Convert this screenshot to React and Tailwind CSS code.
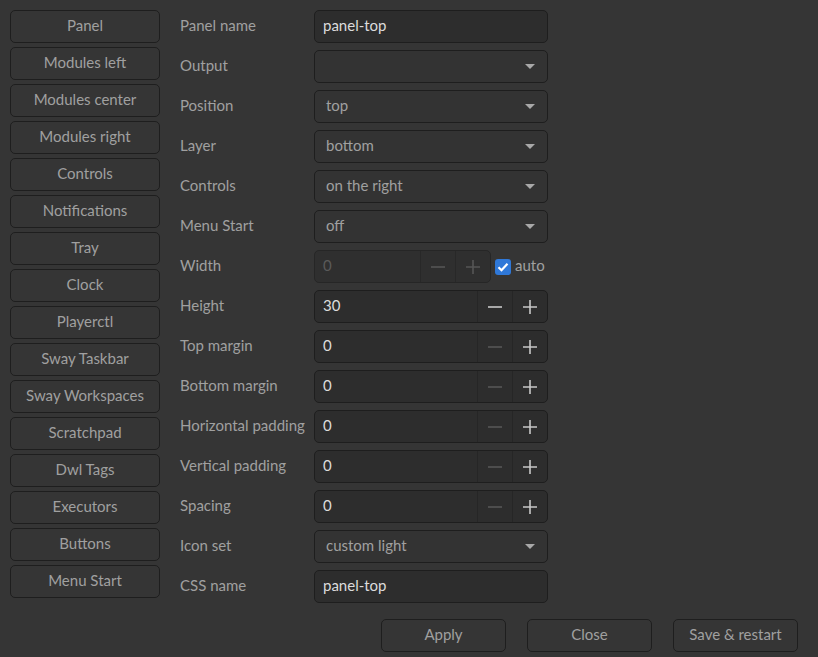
import React from "react";

const tabs = [
  "Panel",
  "Modules left",
  "Modules center",
  "Modules right",
  "Controls",
  "Notifications",
  "Tray",
  "Clock",
  "Playerctl",
  "Sway Taskbar",
  "Sway Workspaces",
  "Scratchpad",
  "Dwl Tags",
  "Executors",
  "Buttons",
  "Menu Start",
];

const rows = [
  { label: "Panel name", type: "entry", value: "panel-top" },
  { label: "Output", type: "combo", value: "" },
  { label: "Position", type: "combo", value: "top" },
  { label: "Layer", type: "combo", value: "bottom" },
  { label: "Controls", type: "combo", value: "on the right" },
  { label: "Menu Start", type: "combo", value: "off" },
  { label: "Width", type: "width", value: "0" },
  { label: "Height", type: "spin", value: "30", minus: true },
  { label: "Top margin", type: "spin", value: "0" },
  { label: "Bottom margin", type: "spin", value: "0" },
  { label: "Horizontal padding", type: "spin", value: "0" },
  { label: "Vertical padding", type: "spin", value: "0" },
  { label: "Spacing", type: "spin", value: "0" },
  { label: "Icon set", type: "combo", value: "custom light" },
  { label: "CSS name", type: "entry", value: "panel-top" },
];

function Minus({ dim }) {
  return (
    <svg width="16" height="16" viewBox="0 0 16 16">
      <path d="M1 8h14" stroke={dim ? "#555555" : "#c8c8c8"} strokeWidth="1.6" />
    </svg>
  );
}

function Plus({ dim }) {
  return (
    <svg width="16" height="16" viewBox="0 0 16 16">
      <path d="M1 8h14M8 1v14" stroke={dim ? "#555555" : "#c8c8c8"} strokeWidth="1.6" />
    </svg>
  );
}

function Arrow() {
  return (
    <svg width="10" height="6" viewBox="0 0 10 6">
      <path d="M0 0h10L5 5z" fill="#a8a8a8" />
    </svg>
  );
}

function Field({ row }) {
  if (row.type === "entry") {
    return (
      <div className="w-[234px] h-[33px] rounded-[5px] border border-[#1e1e1e] bg-[#2d2d2d] flex items-center px-[8px] pb-[2px] text-[#dcdcdc]">
        {row.value}
      </div>
    );
  }
  if (row.type === "combo") {
    return (
      <div className="w-[234px] h-[33px] rounded-[5px] border border-[#1e1e1e] bg-[#333333] flex items-center justify-between pl-[11px] pr-[12px] text-[#a0a0a0]">
        <span className="pb-[2px]">{row.value}</span>
        <Arrow />
      </div>
    );
  }
  if (row.type === "width") {
    return (
      <div className="flex items-center gap-[4px]">
        <div className="w-[177px] h-[33px] rounded-[5px] border border-[#262626] bg-[#2f2f2f] flex">
          <div className="flex-1 flex items-center px-[8px] pb-[2px] text-[#5a5a5a]">{row.value}</div>
          <div className="w-[35px] border-l border-[#282828] flex items-center justify-center">
            <Minus dim />
          </div>
          <div className="w-[35px] border-l border-[#282828] flex items-center justify-center">
            <Plus dim />
          </div>
        </div>
        <div className="w-[16px] h-[16px] rounded-[3px] bg-[#2f78d8] flex items-center justify-center">
          <svg width="12" height="12" viewBox="0 0 12 12">
            <path d="M1.5 6.2l3 3 6-6.5" stroke="#ffffff" strokeWidth="2.2" fill="none" />
          </svg>
        </div>
        <span className="text-[#a0a0a0] pb-[2px]">auto</span>
      </div>
    );
  }
  return (
    <div className="w-[234px] h-[33px] rounded-[5px] border border-[#1e1e1e] bg-[#2d2d2d] flex">
      <div className="flex-1 flex items-center px-[8px] pb-[2px] text-[#dcdcdc]">{row.value}</div>
      <div className="w-[35px] border-l border-[#262626] flex items-center justify-center">
        <Minus dim={!row.minus} />
      </div>
      <div className="w-[35px] border-l border-[#262626] flex items-center justify-center">
        <Plus />
      </div>
    </div>
  );
}

export default function App() {
  return (
    <div
      className="w-[818px] h-[657px] bg-[#353535] text-[15px] overflow-hidden"
      style={{ fontFamily: "Lato, 'Noto Sans', sans-serif" }}
    >
      <div className="flex pt-[10px] pl-[10px]">
        {/* Sidebar */}
        <div className="flex flex-col gap-[4px] w-[150px]">
          {tabs.map((t) => (
            <div
              key={t}
              className="h-[33px] rounded-[5px] border border-[#1e1e1e] bg-[#353535] flex items-center justify-center pb-[2px] text-[#a0a0a0] whitespace-nowrap"
            >
              {t}
            </div>
          ))}
        </div>

        {/* Form */}
        <div className="flex flex-col gap-[7px] ml-[20px]">
          {rows.map((r) => (
            <div key={r.label} className="flex items-center h-[33px]">
              <div className="w-[134px] text-[#a0a0a0] whitespace-nowrap pb-[2px]">{r.label}</div>
              <Field row={r} />
            </div>
          ))}
        </div>
      </div>

      {/* Footer */}
      <div className="flex justify-end gap-[21px] pr-[20px] mt-[16px]">
        {["Apply", "Close", "Save & restart"].map((b) => (
          <div
            key={b}
            className="w-[125px] h-[33px] rounded-[5px] border border-[#1e1e1e] bg-[#353535] flex items-center justify-center pb-[2px] text-[#a0a0a0]"
          >
            {b}
          </div>
        ))}
      </div>
    </div>
  );
}
